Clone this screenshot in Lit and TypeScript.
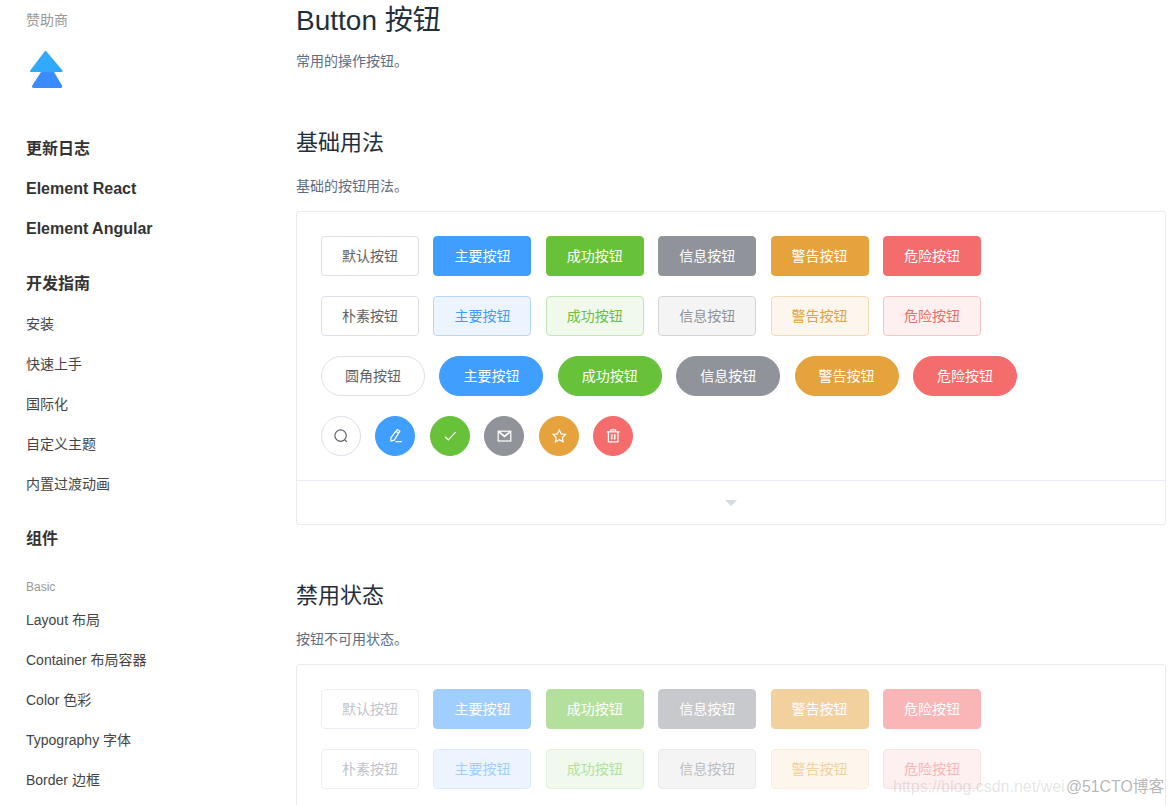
import { LitElement, html, css, svg } from "lit";
import { customElement } from "lit/decorators.js";

const kinds = ["default", "primary", "success", "info", "warning", "danger"];
const labels = ["默认按钮", "主要按钮", "成功按钮", "信息按钮", "警告按钮", "危险按钮"];
const plainLabels = ["朴素按钮", ...labels.slice(1)];
const roundLabels = ["圆角按钮", ...labels.slice(1)];

const icons = [
  svg`<circle cx="7.6" cy="7.6" r="5.7"/><path d="M12 12l1.800 1.800"/>`,
  svg`<path d="M10.200 1.500l2.600 1.600-5.400 8.800-3.400 1.300-.1-3.400z"/><path d="M9 3.500l2.600 1.600M8.500 13.700h6.300"/>`,
  svg`<path d="M3 8.700l3.300 3.100 7.300-7.600"/>`,
  svg`<rect x="2.200" y="3.200" width="12.600" height="9.800"/><path d="M2.600 3.600l5.900 4.800 5.900-4.800" stroke-width="1.700"/>`,
  svg`<path d="M8.300 2l1.900 3.900 4.300.6-3.100 3 .7 4.300-3.800-2-3.800 2 .7-4.300-3.100-3 4.300-.6z"/>`,
  svg`<path d="M1.800 3.800h12.800M5.800 3.800V1.800h4.800v2M3.400 3.800v10h9.600v-10" /><path d="M6.700 6.200v5.200M9.700 6.200v5.200" stroke-width="1.600"/>`,
];

@customElement("app-root")
export class AppRoot extends LitElement {
  static styles = css`
    :host {
      display: block;
      height: 805px;
      overflow: hidden;
      position: relative;
      background: #fff;
      font-family: "Liberation Sans", "Noto Sans CJK SC", sans-serif;
    }
    .page { display: flex; align-items: flex-start; }
    .side { width: 270px; padding-left: 26px; flex: none; color: #333; }
    .sponsor { font-size: 14px; line-height: 20px; padding-top: 10px; color: #999; }
    .logo { display: block; margin: 20px 0 0 3px; width: 36px; height: 42px; }
    .group { font-size: 16px; font-weight: bold; line-height: 40px; color: #333; }
    .first { margin-top: 37px; }
    .gap { margin-top: 15px; }
    .item { font-size: 14px; line-height: 40px; color: #444; }
    .sub { font-size: 12px; line-height: 26px; color: #999; margin-top: 15px; }
    .main { flex: 1; margin-right: 8px; min-width: 0; color: #1f2f3d; }
    h2 { margin: 0; padding-top: 1px; font-size: 28px; font-weight: 400; line-height: 40px; }
    h3 { margin: 0; font-size: 22px; font-weight: 400; line-height: 30px; }
    p { margin: 0; font-size: 14px; line-height: 22px; color: #5e6d82; }
    .lead { margin-top: 9px; }
    .h1st { margin-top: 56px; }
    .h2nd { margin-top: 56px; }
    .desc { margin: 17px 0 14px; }
    .box { border: 1px solid #ebebeb; border-radius: 3px; }
    .demo { padding: 24px; display: flex; flex-direction: column; gap: 20px; }
    .row { display: flex; gap: 14.4px; }
    .foot { height: 43px; border-top: 1px solid #eaeefb; display: flex; align-items: center; justify-content: center; }
    .caret { width: 0; height: 0; border: 6px solid transparent; border-top: 6px solid #d3dce6; border-bottom: 0; }
    .btn {
      box-sizing: border-box; width: 98px; height: 40px; flex: none;
      display: flex; align-items: center; justify-content: center;
      font-size: 14px; border: 1px solid #dcdfe6; border-radius: 4px;
      color: #606266; background: #fff; padding-bottom: 2px;
    }
    .round { width: 104px; border-radius: 20px; }
    .circle { width: 40px; border-radius: 50%; padding: 0; }
    .circle svg { width: 16px; height: 16px; fill: none; stroke: currentColor; stroke-width: 1.2; }
    .primary { background: #409eff; border-color: #409eff; color: #fff; }
    .success { background: #67c23a; border-color: #67c23a; color: #fff; }
    .info { background: #909399; border-color: #909399; color: #fff; }
    .warning { background: #e6a23c; border-color: #e6a23c; color: #fff; }
    .danger { background: #f56c6c; border-color: #f56c6c; color: #fff; }
    .plain.primary { background: #ecf5ff; border-color: #b3d8ff; color: #409eff; }
    .plain.success { background: #f0f9eb; border-color: #c2e7b0; color: #67c23a; }
    .plain.info { background: #f4f4f5; border-color: #d3d4d6; color: #909399; }
    .plain.warning { background: #fdf6ec; border-color: #f5dab1; color: #e6a23c; }
    .plain.danger { background: #fef0f0; border-color: #fbc4c4; color: #f56c6c; }
    .dis.default { color: #c0c4cc; border-color: #ebeef5; }
    .dis.primary { background: #a0cfff; border-color: #a0cfff; }
    .dis.success { background: #b3e19d; border-color: #b3e19d; }
    .dis.info { background: #c8c9cc; border-color: #c8c9cc; }
    .dis.warning { background: #f3d19e; border-color: #f3d19e; }
    .dis.danger { background: #fab6b6; border-color: #fab6b6; }
    .dis.plain.primary { background: #ecf5ff; border-color: #d9ecff; color: #a0cfff; }
    .dis.plain.success { background: #f0f9eb; border-color: #e1f3d8; color: #b3e19d; }
    .dis.plain.info { background: #f4f4f5; border-color: #e9e9eb; color: #bcbec2; }
    .dis.plain.warning { background: #fdf6ec; border-color: #faecd8; color: #f3d19e; }
    .dis.plain.danger { background: #fef0f0; border-color: #fde2e2; color: #fab6b6; }
    .mark { position: absolute; left: 893px; top: 776px; font-size: 16px; line-height: 22px; color: rgba(120,120,120,.2); white-space: nowrap; }
    .mark2 { position: absolute; left: 1066px; top: 776px; font-size: 15.8px; line-height: 22px; color: rgba(90,90,90,.45); white-space: nowrap; }
  `;

  row(names: string[], cls = "") {
    return html`<div class="row">${names.map((n, i) => html`<div class="btn ${kinds[i]} ${cls}">${n}</div>`)}</div>`;
  }

  render() {
    return html`
      <div class="page">
        <aside class="side">
          <div class="sponsor">赞助商</div>
          <svg class="logo" viewBox="0 0 36 42">
            <path d="M4.500 38a1.500 1.500 0 0 1-1.200-2.400L12 22h13l8 13.600A1.500 1.500 0 0 1 31.700 38z" fill="#3a8bff"/>
            <path d="M17 1l16.500 19.600A1 1 0 0 1 33 22H2a1 1 0 0 1-.8-1.600L16 1a.7.7 0 0 1 1 0z" fill="#30a9ff"/>
          </svg>
          <div class="group first">更新日志</div>
          <div class="group">Element React</div>
          <div class="group">Element Angular</div>
          <div class="group gap">开发指南</div>
          <div class="item">安装</div>
          <div class="item">快速上手</div>
          <div class="item">国际化</div>
          <div class="item">自定义主题</div>
          <div class="item">内置过渡动画</div>
          <div class="group gap">组件</div>
          <div class="sub">Basic</div>
          <div class="item">Layout 布局</div>
          <div class="item">Container 布局容器</div>
          <div class="item">Color 色彩</div>
          <div class="item">Typography 字体</div>
          <div class="item">Border 边框</div>
        </aside>
        <main class="main">
          <h2>Button 按钮</h2>
          <p class="lead">常用的操作按钮。</p>
          <h3 class="h1st">基础用法</h3>
          <p class="desc">基础的按钮用法。</p>
          <section class="box">
            <div class="demo">
              ${this.row(labels)}
              ${this.row(plainLabels, "plain")}
              ${this.row(roundLabels, "round")}
              <div class="row">${icons.map((ic, i) => html`<div class="btn circle ${kinds[i]}"><svg viewBox="0 0 16 16">${ic}</svg></div>`)}</div>
            </div>
            <div class="foot"><div class="caret"></div></div>
          </section>
          <h3 class="h2nd">禁用状态</h3>
          <p class="desc">按钮不可用状态。</p>
          <section class="box">
            <div class="demo">
              ${this.row(labels, "dis")}
              ${this.row(plainLabels, "dis plain")}
            </div>
          </section>
        </main>
      </div>
      <div class="mark">https://blog.csdn.net/wei</div>
      <div class="mark2">@51CTO博客</div>
    `;
  }
}
